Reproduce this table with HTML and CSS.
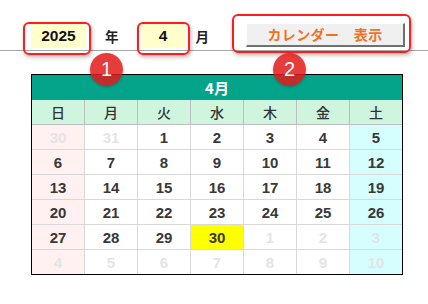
FILE: index.html
```html
<!DOCTYPE html>
<html lang="ja">
<head>
<meta charset="utf-8">
<link rel="stylesheet" href="styles.css">
</head>
<body>
<div class="page">
  <div class="toolbar">
    <div class="field field-year">2025</div>
    <div class="unit unit-year">年</div>
    <div class="field field-month">4</div>
    <div class="unit unit-month">月</div>
    <div class="button">カレンダー　表示</div>
  </div>

  <div class="calendar">
    <div class="title">4月</div>
    <div class="grid">
      <div class="wd sun">日</div><div class="wd">月</div><div class="wd">火</div><div class="wd">水</div><div class="wd">木</div><div class="wd">金</div><div class="wd sat">土</div>

      <div class="d sun out">30</div><div class="d out">31</div><div class="d">1</div><div class="d">2</div><div class="d">3</div><div class="d">4</div><div class="d sat">5</div>
      <div class="d sun">6</div><div class="d">7</div><div class="d">8</div><div class="d">9</div><div class="d">10</div><div class="d">11</div><div class="d sat">12</div>
      <div class="d sun">13</div><div class="d">14</div><div class="d">15</div><div class="d">16</div><div class="d">17</div><div class="d">18</div><div class="d sat">19</div>
      <div class="d sun">20</div><div class="d">21</div><div class="d">22</div><div class="d">23</div><div class="d">24</div><div class="d">25</div><div class="d sat">26</div>
      <div class="d sun">27</div><div class="d">28</div><div class="d">29</div><div class="d today">30</div><div class="d out">1</div><div class="d out">2</div><div class="d sat out">3</div>
      <div class="d sun out last">4</div><div class="d out last">5</div><div class="d out last">6</div><div class="d out last">7</div><div class="d out last">8</div><div class="d out last">9</div><div class="d sat out last">10</div>
    </div>
  </div>

  <div class="note note-year"></div>
  <div class="note note-month"></div>
  <div class="note note-button"></div>
  <div class="badge badge-1">1</div>
  <div class="badge badge-2">2</div>
</div>
</body>
</html>
```

FILE: styles.css
```css
* { box-sizing: border-box; }
html, body { margin: 0; padding: 0; background: #fff; }
body {
  font-family: "Liberation Sans", "Noto Sans CJK JP", sans-serif;
  color: #333;
}
.page {
  position: relative;
  width: 428px;
  height: 304px;
  overflow: hidden;
}
.toolbar {
  height: 51px;
  border-bottom: 1px solid #a6a6a6;
  display: flex;
  align-items: flex-start;
  padding: 23px 0 0 31px;
}
.field {
  height: 25px;
  background: #ffffcc;
  font-weight: bold;
  font-size: 15.5px;
  color: #111;
  display: flex;
  align-items: center;
  justify-content: center;
  padding-top: 1px;
}
.field-year { width: 55px; }
.field-month { width: 45px; }
.unit {
  height: 25px;
  display: flex;
  align-items: center;
  font-family: "Noto Sans CJK JP", sans-serif;
  font-weight: bold;
  font-size: 13.5px;
  color: #222;
}
.unit-year { margin-left: 19px; margin-right: 22px; }
.unit-month { margin-left: 10px; margin-right: 37px; }
.button {
  width: 159px;
  height: 24px;
  background: #f0f0f0;
  border-top: 1px solid #fdfdfd;
  border-left: 1px solid #fdfdfd;
  border-right: 2px solid #707070;
  border-bottom: 2px solid #707070;
  font-family: "Noto Sans CJK JP", sans-serif;
  font-weight: bold;
  font-size: 14px;
  letter-spacing: 0.4px;
  color: #f0721e;
  display: flex;
  align-items: center;
  justify-content: center;
  padding-bottom: 1px;
}

.calendar {
  margin: 23px 0 0 31px;
  width: 372px;
  border: 1px solid #000;
}
.title {
  height: 25px;
  background: #04a48b;
  color: #fff;
  font-family: "Noto Sans CJK JP", sans-serif;
  font-weight: bold;
  font-size: 15px;
  display: flex;
  align-items: center;
  justify-content: center;
}
.grid {
  display: grid;
  grid-template-columns: 53px 53px 53px 53px 53px 53px 52px;
}
.wd {
  height: 25px;
  background: #cff5df;
  border-right: 1px solid #bdbdbd;
  border-bottom: 1px solid #bdbdbd;
  font-family: "Noto Sans CJK JP", sans-serif;
  font-weight: 500;
  font-size: 14px;
  color: #333;
  display: flex;
  align-items: center;
  justify-content: center;
}
.d {
  height: 25px;
  border-right: 1px solid #d9d9d9;
  border-bottom: 1px solid #d9d9d9;
  font-weight: bold;
  font-size: 15px;
  color: #383838;
  display: flex;
  align-items: center;
  justify-content: center;
}
.grid > div:nth-child(7n) { border-right: none; }
.d.last { border-bottom: none; height: 24px; }
.d.sun { background: #fff0f2; }
.d.sat { background: #d5feff; }
.d.out { color: #e4e4e4; }
.d.today { background: #ffff00; }

.note {
  position: absolute;
  border: 2px solid #ff1c1c;
  border-radius: 6px;
  box-shadow: 1px 2px 4px rgba(0, 0, 0, 0.3);
}
.note-year { left: 23px; top: 22px; width: 68px; height: 33px; }
.note-month { left: 137px; top: 22px; width: 53px; height: 33px; }
.note-button { left: 232px; top: 14px; width: 179px; height: 39px; }

.badge {
  position: absolute;
  width: 33px;
  height: 33px;
  border-radius: 50%;
  background: rgba(226, 26, 26, 0.85);
  color: #fff;
  font-family: "Liberation Sans", sans-serif;
  font-size: 20px;
  display: flex;
  align-items: center;
  justify-content: center;
  box-shadow: 0 1px 3px rgba(0, 0, 0, 0.25);
}
.badge-1 { left: 90px; top: 53px; }
.badge-2 { left: 273px; top: 53px; }
```
